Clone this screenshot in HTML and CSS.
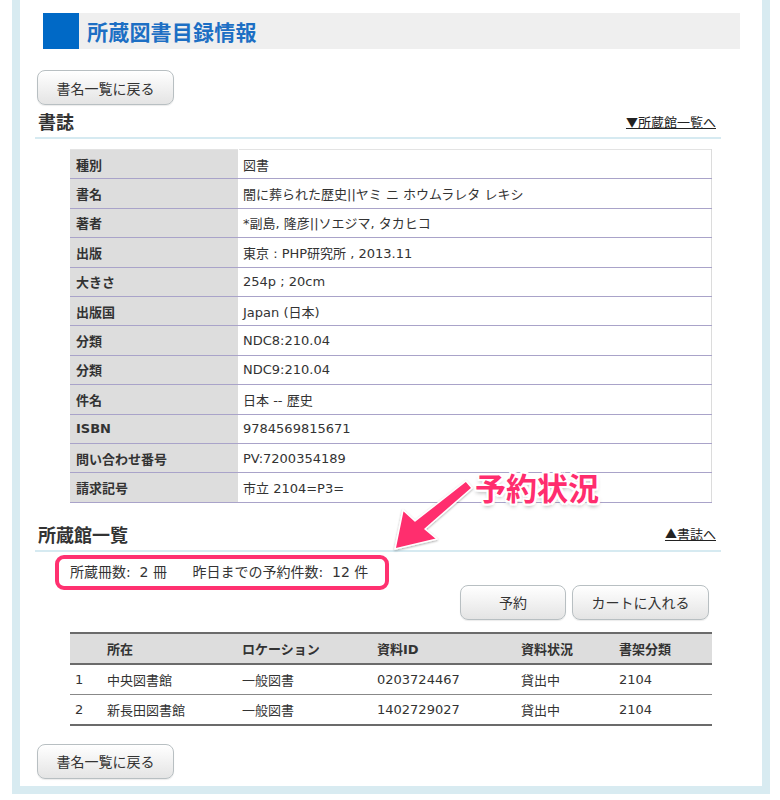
FILE: index.html
```html
<!DOCTYPE html>
<html lang="ja">
<head>
  <meta charset="UTF-8" />
  <title>所蔵図書目録情報</title>
  <link rel="stylesheet" href="styles.css">
</head>
<body>
  <div class="frame">
    <div class="page">
      <h1 class="page-title"><span class="mark"></span>所蔵図書目録情報</h1>

      <div class="content">
        <button class="btn back-btn">書名一覧に戻る</button>

        <div class="section-head">
          <h2>書誌</h2>
          <a href="#holdings"><span class="tri">▼</span>所蔵館一覧へ</a>
        </div>

        <table class="biblio">
          <tr><th>種別</th><td>図書</td></tr>
          <tr><th>書名</th><td>闇に葬られた歴史||ヤミ ニ ホウムラレタ レキシ</td></tr>
          <tr><th>著者</th><td>*副島, 隆彦||ソエジマ, タカヒコ</td></tr>
          <tr><th>出版</th><td>東京 : PHP研究所 , 2013.11</td></tr>
          <tr><th>大きさ</th><td>254p ; 20cm</td></tr>
          <tr><th>出版国</th><td>Japan (日本)</td></tr>
          <tr><th>分類</th><td>NDC8:210.04</td></tr>
          <tr><th>分類</th><td>NDC9:210.04</td></tr>
          <tr><th>件名</th><td>日本 -- 歴史</td></tr>
          <tr><th>ISBN</th><td>9784569815671</td></tr>
          <tr><th>問い合わせ番号</th><td>PV:7200354189</td></tr>
          <tr><th>請求記号</th><td>市立 2104=P3=</td></tr>
        </table>

        <div class="section-head" id="holdings">
          <h2>所蔵館一覧</h2>
          <a href="#"><span class="tri">▲</span>書誌へ</a>
        </div>

        <div class="count-line">
          <span>所蔵冊数:&nbsp; 2 冊</span>
          <span class="count-gap">昨日までの予約件数:&nbsp; 12 件</span>
        </div>

        <div class="actions">
          <button class="btn reserve-btn">予約</button>
          <button class="btn cart-btn">カートに入れる</button>
        </div>

        <table class="holdings">
          <thead>
            <tr>
              <th class="c-no"></th>
              <th class="c-lib">所在</th>
              <th class="c-loc">ロケーション</th>
              <th class="c-id">資料ID</th>
              <th class="c-status">資料状況</th>
              <th class="c-shelf">書架分類</th>
            </tr>
          </thead>
          <tbody>
            <tr>
              <td>1</td><td>中央図書館</td><td>一般図書</td><td>0203724467</td><td>貸出中</td><td>2104</td>
            </tr>
            <tr>
              <td>2</td><td>新長田図書館</td><td>一般図書</td><td>1402729027</td><td>貸出中</td><td>2104</td>
            </tr>
          </tbody>
        </table>

        <button class="btn back-btn bottom-btn">書名一覧に戻る</button>
      </div>

      <!-- annotation drawn over the page -->
      <div class="callout">予約状況</div>
      <svg class="callout-arrow" width="100" height="90" viewBox="0 0 100 90">
        <defs>
          <filter id="arrowShadow" x="-20%" y="-20%" width="140%" height="140%">
            <feDropShadow dx="0" dy="1" stdDeviation="1.2" flood-color="#000" flood-opacity="0.35"/>
          </filter>
        </defs>
        <polygon points="15,79 23,40 35,51 86,11 92,18 45,59 57,69"
                 fill="#ff2d6e" stroke="#fff" stroke-width="1.5" stroke-linejoin="round"
                 filter="url(#arrowShadow)"/>
      </svg>
    </div>
  </div>
</body>
</html>
```

FILE: styles.css
```css
body {
  margin: 0;
  background-color: #fff;
  font-family: "DejaVu Sans", "Noto Sans CJK JP", sans-serif;
  color: #333;
}

.frame {
  margin: 0 10px 0 12px;
  border: 8px solid #d8ebf1;
  border-top: 0;
  background-color: #fff;
}

.page {
  position: relative;
  padding: 13px 0 7px;
}

.page-title {
  display: flex;
  align-items: center;
  margin: 0 22px 0 23px;
  height: 36px;
  background-color: #efefef;
  color: #1d6fc4;
  font-family: "Noto Sans CJK JP", sans-serif;
  font-size: 21px;
  font-weight: bold;
  letter-spacing: 0.2px;
}

.page-title .mark {
  width: 36px;
  height: 36px;
  background-color: #0069c6;
  margin-right: 8px;
}

.content {
  padding: 0 41px 0 15px;
}

.btn {
  font-family: "DejaVu Sans", "Noto Sans CJK JP", sans-serif;
  font-size: 14px;
  color: #333;
  height: 35px;
  border: 1px solid #b8bfc2;
  border-radius: 8px;
  background: linear-gradient(#ffffff, #f3f3f3 45%, #e4e4e4);
  box-shadow: inset 0 1px 0 #fff, 0 1px 1px rgba(0, 0, 0, 0.08);
  cursor: pointer;
}

.back-btn {
  width: 137px;
  margin: 21px 0 0 2px;
}

.bottom-btn {
  margin-top: 18px;
}

.section-head {
  display: flex;
  justify-content: space-between;
  align-items: center;
  height: 32px;
  padding: 0 5px 0 3px;
  border-bottom: 2px solid #d6eaf1;
}

.section-head h2 {
  margin: 0;
  font-size: 18px;
  font-weight: bold;
  color: #333;
}

.section-head a {
  font-size: 13px;
  color: #222;
  text-decoration: underline;
}

.section-head .tri {
  font-family: "Noto Sans CJK JP", sans-serif;
  font-size: 12px;
}

table {
  border-collapse: collapse;
  font-size: 13px;
}

.biblio {
  margin: 10px 9px 0 35px;
  width: 642px;
  border-top: 1px solid #e3e3e3;
  border-right: 1px solid #dcdcdc;
}

.biblio th,
.biblio td {
  height: 28.4px;
  padding: 0 6px;
  text-align: left;
  border-bottom: 1px solid #a9a3c9;
}

.biblio th {
  width: 156px;
  background-color: #dddddd;
  font-weight: bold;
  border-right: 1px solid #fff;
}

.biblio td {
  padding-left: 4px;
}

.section-head#holdings {
  margin-top: 15px;
}

.count-line {
  display: inline-block;
  margin: 10px 0 0 27px;
  padding: 0 14px 0 8px;
  line-height: 21px;
  font-size: 14px;
  outline: 4px solid #ff3170;
  outline-offset: 3px;
  border-radius: 2px;
}

.count-gap {
  margin-left: 21px;
}

.actions {
  display: flex;
  justify-content: flex-end;
  gap: 6px;
  margin: 2px 12px 0 0;
}

.reserve-btn {
  width: 106px;
}

.cart-btn {
  width: 137px;
}

.holdings {
  margin: 12px 9px 0 35px;
  width: 642px;
  border-top: 2px solid #6b6b6b;
  border-bottom: 2px solid #6b6b6b;
}

.holdings th,
.holdings td {
  height: 29px;
  padding: 0 0 0 5px;
  text-align: left;
}

.holdings thead th {
  background-color: #dddddd;
  font-weight: bold;
  border-bottom: 2px solid #6b6b6b;
}

.holdings tbody tr + tr td {
  border-top: 1px solid #888;
}

.c-no { width: 27px; }
.c-lib { width: 130px; }
.c-loc { width: 130px; }
.c-id { width: 139px; }
.c-status { width: 93px; }

.callout {
  position: absolute;
  left: 455px;
  top: 471px;
  font-family: "Noto Sans CJK JP", sans-serif;
  font-size: 31px;
  font-weight: bold;
  line-height: 1;
  color: #ff2d6e;
  text-shadow:
    2px 0 0 #fff, -2px 0 0 #fff, 0 2px 0 #fff, 0 -2px 0 #fff,
    2px 2px 0 #fff, -2px 2px 0 #fff, 2px -2px 0 #fff, -2px -2px 0 #fff,
    0 3px 4px rgba(0, 0, 0, 0.35);
}

.callout-arrow {
  position: absolute;
  left: 360px;
  top: 470px;
}
```
